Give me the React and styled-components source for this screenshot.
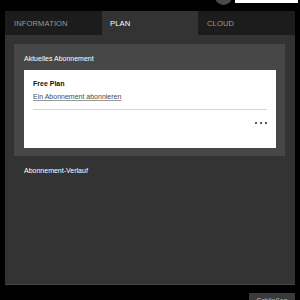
import React from "react";
import styled, { createGlobalStyle } from "styled-components";

const GlobalStyle = createGlobalStyle`
  html, body {
    margin: 0;
    padding: 0;
    background: #000;
    height: 300px;
    overflow: hidden;
    font-family: "Liberation Sans", Arial, sans-serif;
  }
`;

const Page = styled.div`
  padding: 0 5px;
  display: flex;
  flex-direction: column;
`;

const TopBar = styled.div`
  height: 11px;
  display: flex;
  justify-content: flex-end;
  align-items: flex-start;
  gap: 3px;
  margin-right: -3px;
`;

const Avatar = styled.div`
  width: 17px;
  height: 17px;
  border-radius: 50%;
  background: #4a4a4a;
  margin-top: -12px;
`;

const UserBar = styled.div`
  width: 63px;
  height: 3px;
  background: #fff;
`;

const Tabs = styled.div`
  display: grid;
  grid-template-columns: 97px 96px 97px;
  height: 24px;
  background: #1c1c1c;
`;

const Tab = styled.div`
  display: flex;
  align-items: center;
  padding-left: ${(p) => (p.active ? "8px" : "9px")};
  font-size: 7.6px;
  letter-spacing: 0.1px;
  color: ${(p) => (p.active ? "#fff" : "#9a9a9a")};
  background: ${(p) => (p.active ? "#333" : "transparent")};
`;

const Panel = styled.div`
  height: 250px;
  box-sizing: border-box;
  background: #333;
  padding: 9px 10px 0 9px;
  border-bottom: 1px solid #464646;
`;

const Section = styled.div`
  background: #474747;
  padding: 0 9px 8px 10px;
`;

const SectionTitle = styled.div`
  font-size: 7px;
  color: #fff;
  height: 26px;
  line-height: 29px;
`;

const Card = styled.div`
  background: #fff;
  height: 78px;
  box-sizing: border-box;
  padding: 9px 9px 0;
`;

const PlanName = styled.div`
  font-size: 7px;
  font-weight: bold;
  line-height: 9px;
  color: #111;
`;

const SubscribeLink = styled.div`
  margin-top: 4px;
  font-size: 7px;
  line-height: 9px;
  color: #4a4a4a;
  text-decoration: underline;
  text-decoration-color: #999;
`;

const Divider = styled.div`
  height: 1px;
  background: #d6d6d6;
  margin-top: 8px;
`;

const Actions = styled.div`
  display: flex;
  justify-content: flex-end;
  gap: 3px;
  margin-top: 12px;
`;

const Dot = styled.span`
  width: 2px;
  height: 2px;
  border-radius: 50%;
  background: #222;
`;

const HistoryTitle = styled.div`
  font-size: 7px;
  color: #fff;
  margin-top: 10px;
  margin-left: 10px;
  line-height: 10px;
`;

const Footer = styled.div`
  display: flex;
  justify-content: flex-end;
  padding-top: 8px;
`;

const CloseButton = styled.button`
  width: 46px;
  height: 20px;
  border: none;
  background: #3a3a3a;
  color: #bbb;
  font-family: "Liberation Sans", Arial, sans-serif;
  font-size: 7px;
  padding: 4px 0 0;
  display: flex;
  justify-content: center;
  align-items: flex-start;
`;

export default function App() {
  return (
    <>
      <GlobalStyle />
      <Page>
        <TopBar>
          <Avatar />
          <UserBar />
        </TopBar>
        <Tabs>
          <Tab>INFORMATION</Tab>
          <Tab active>PLAN</Tab>
          <Tab>CLOUD</Tab>
        </Tabs>
        <Panel>
          <Section>
            <SectionTitle>Aktuelles Abonnement</SectionTitle>
            <Card>
              <PlanName>Free Plan</PlanName>
              <SubscribeLink>Ein Abonnement abonnieren</SubscribeLink>
              <Divider />
              <Actions>
                <Dot />
                <Dot />
                <Dot />
              </Actions>
            </Card>
          </Section>
          <HistoryTitle>Abonnement-Verlauf</HistoryTitle>
        </Panel>
        <Footer>
          <CloseButton>Schließen</CloseButton>
        </Footer>
      </Page>
    </>
  );
}
